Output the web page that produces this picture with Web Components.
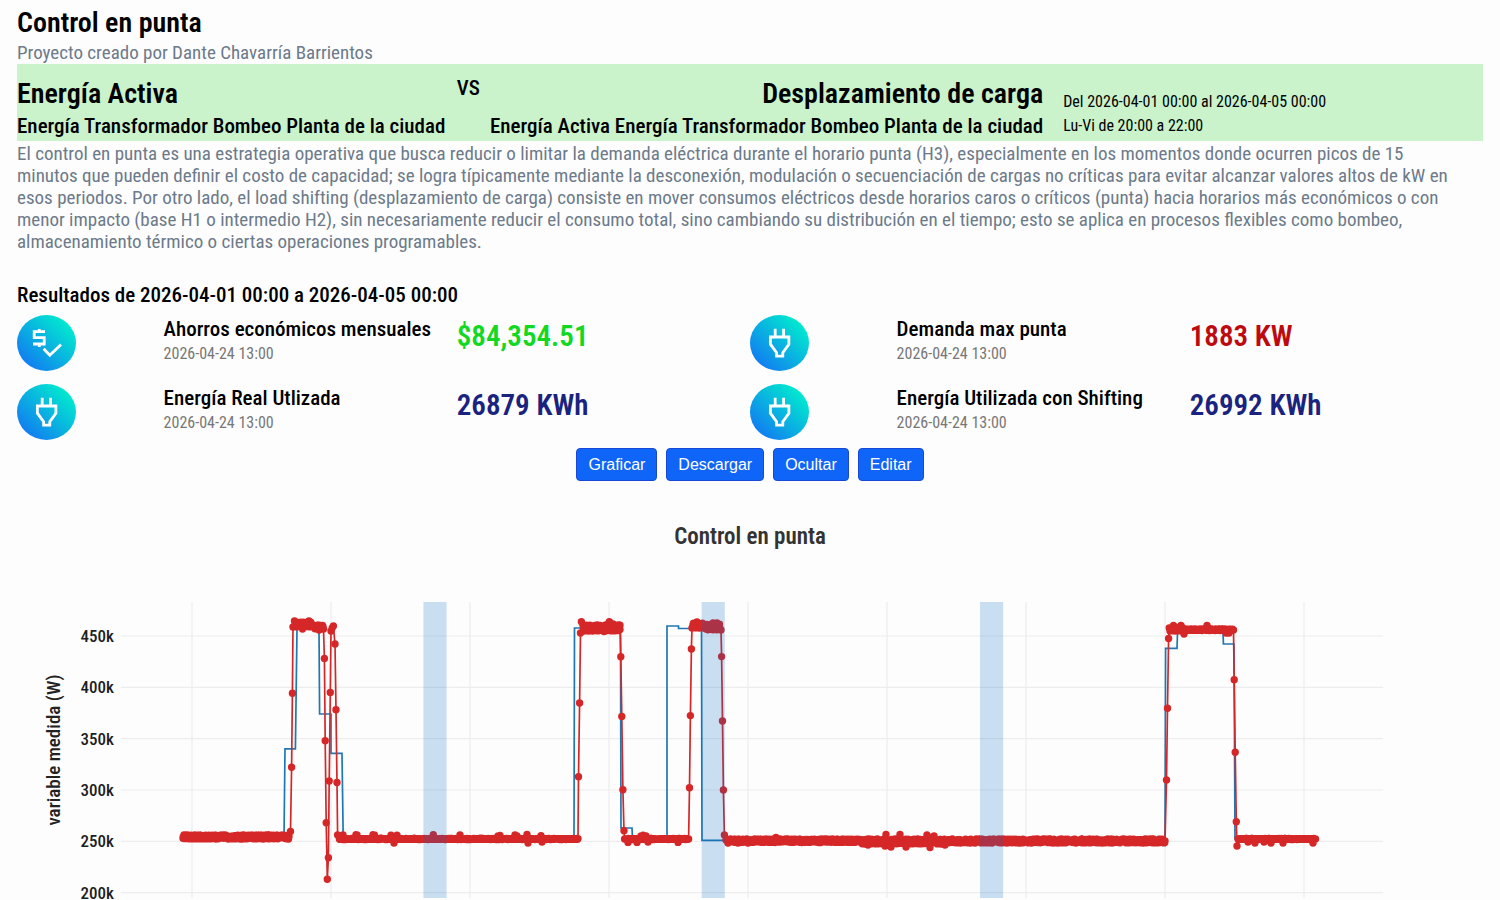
<!DOCTYPE html>
<html lang="es">
<head>
<meta charset="utf-8">
<meta name="viewport" content="width=device-width, initial-scale=1">
<title>Control en punta</title>
<style>
  body {
    margin: 0;
    background: #fdfdfe;
    color: #000;
    font-family: "Roboto Condensed", Roboto, "Liberation Sans", sans-serif;
  }
</style>
</head>
<body>
<peak-page>
  <project-header slot="header" heading="Control en punta">Proyecto creado por Dante Chavarría Barrientos</project-header>
  <compare-banner slot="header">
    <span slot="left-title">Energía Activa</span>
    <span slot="left-source">Energía Transformador Bombeo Planta de la ciudad</span>
    <span slot="right-title">Desplazamiento de carga</span>
    <span slot="right-source">Energía Activa Energía Transformador Bombeo Planta de la ciudad</span>
    <span slot="range">Del 2026-04-01 00:00 al 2026-04-05 00:00</span>
    <span slot="schedule">Lu-Vi de 20:00 a 22:00</span>
  </compare-banner>
  <span slot="description">El control en punta es una estrategia operativa que busca reducir o limitar la demanda eléctrica durante el horario punta (H3), especialmente en los momentos donde ocurren picos de 15 minutos que pueden definir el costo de capacidad; se logra típicamente mediante la desconexión, modulación o secuenciación de cargas no críticas para evitar alcanzar valores altos de kW en esos periodos. Por otro lado, el load shifting (desplazamiento de carga) consiste en mover consumos eléctricos desde horarios caros o críticos (punta) hacia horarios más económicos o con menor impacto (base H1 o intermedio H2), sin necesariamente reducir el consumo total, sino cambiando su distribución en el tiempo; esto se aplica en procesos flexibles como bombeo, almacenamiento térmico o ciertas operaciones programables.</span>
  <span slot="results-title">Resultados de 2026-04-01 00:00 a 2026-04-05 00:00</span>
  <result-item slot="results" icon="savings" date="2026-04-24 13:00" value="$84,354.51" style="--value: #12d822">Ahorros económicos mensuales</result-item>
  <result-item slot="results" icon="plug" date="2026-04-24 13:00" value="1883 KW" style="--value: #bd0a0e">Demanda max punta</result-item>
  <result-item slot="results" icon="plug" date="2026-04-24 13:00" value="26879 KWh">Energía Real Utlizada</result-item>
  <result-item slot="results" icon="plug" date="2026-04-24 13:00" value="26992 KWh">Energía Utilizada con Shifting</result-item>
  <action-button slot="actions">Graficar</action-button>
  <action-button slot="actions">Descargar</action-button>
  <action-button slot="actions">Ocultar</action-button>
  <action-button slot="actions">Editar</action-button>
  <power-chart slot="chart"></power-chart>
</peak-page>

<script>
class PeakPage extends HTMLElement {
  connectedCallback() {
    this.attachShadow({ mode: 'open' });
    this.shadowRoot.innerHTML = `
      <style>
        :host {
          display: block;
          padding: 4px 17px 0;
        }
        .description {
          margin: 2px 0 0;
          padding-right: 24px;
          font-size: 19px;
          line-height: 22px;
          color: #6c7a89;
        }
        h4 {
          margin: 30px 0 7px;
          font-size: 21px;
          line-height: 25px;
          font-weight: 500;
        }
        .results {
          display: grid;
          grid-template-columns: 1fr 1fr;
          row-gap: 13px;
        }
        .actions {
          display: flex;
          justify-content: center;
          gap: 9px;
          margin-top: 8px;
        }
      </style>
      <main>
        <slot name="header"></slot>
        <p class="description"><slot name="description"></slot></p>
        <h4><slot name="results-title"></slot></h4>
        <div class="results"><slot name="results"></slot></div>
        <div class="actions"><slot name="actions"></slot></div>
        <slot name="chart"></slot>
      </main>
    `;
  }
}
customElements.define('peak-page', PeakPage);

class ProjectHeader extends HTMLElement {
  connectedCallback() {
    this.attachShadow({ mode: 'open' });
    this.shadowRoot.innerHTML = `
      <style>
        :host {
          display: block;
        }
        h1 {
          margin: 0;
          font-size: 28px;
          line-height: 38px;
          font-weight: 600;
        }
        p {
          margin: 0;
          font-size: 19px;
          line-height: 22px;
          color: #6c7a89;
        }
      </style>
      <h1>${this.getAttribute('heading')}</h1>
      <p><slot></slot></p>
    `;
  }
}
customElements.define('project-header', ProjectHeader);

class CompareBanner extends HTMLElement {
  connectedCallback() {
    this.attachShadow({ mode: 'open' });
    this.shadowRoot.innerHTML = `
      <style>
        :host {
          display: grid;
          grid-template-columns: 30% auto 1fr 30%;
          background: #caf2cb;
          padding: 11px 0 2px;
        }
        h2, h3, p {
          margin: 0;
          white-space: nowrap;
        }
        h2 {
          font-size: 28px;
          line-height: 38px;
          font-weight: 600;
        }
        h3 {
          font-size: 21px;
          line-height: 26px;
          font-weight: 500;
        }
        .right {
          text-align: right;
        }
        .dates {
          padding: 15px 0 0 20px;
        }
        .dates p {
          font-size: 16px;
          line-height: 24px;
        }
      </style>
      <div>
        <h2><slot name="left-title"></slot></h2>
        <h3><slot name="left-source"></slot></h3>
      </div>
      <h3>VS</h3>
      <div class="right">
        <h2><slot name="right-title"></slot></h2>
        <h3><slot name="right-source"></slot></h3>
      </div>
      <div class="dates">
        <p><slot name="range"></slot></p>
        <p><slot name="schedule"></slot></p>
      </div>
    `;
  }
}
customElements.define('compare-banner', CompareBanner);

const ICONS = {
  savings: `
    <path d="M28 16.7H17.2V22.6H27.2V29H16M22.3 14V16.7M22.3 29V32" />
    <path d="M26.7 33.8L32.8 40.2L44 29.5" />`,
  plug: `
    <path d="M25.2 13.7V22M33.6 13.7V22" />
    <path d="M20.4 22H38.9V29.2L32.8 37.6V41.2H26.6V37.6L20.4 29.2Z" />`
};

class ResultItem extends HTMLElement {
  connectedCallback() {
    this.attachShadow({ mode: 'open' });
    this.shadowRoot.innerHTML = `
      <style>
        :host {
          display: grid;
          grid-template-columns: 20% 40% 40%;
        }
        svg {
          display: block;
          width: 59px;
          height: 56px;
        }
        svg path {
          fill: none;
          stroke: #fff;
          stroke-width: 2.8;
        }
        .name {
          margin: 0;
          font-size: 21px;
          line-height: 28px;
          font-weight: 500;
        }
        .date {
          margin: 0;
          font-size: 16px;
          line-height: 22px;
          color: #777;
        }
        .value {
          font-size: 29px;
          line-height: 42px;
          font-weight: 600;
          color: var(--value, #1a237e);
        }
      </style>
      <svg viewBox="0 0 59 56" aria-hidden="true">
        <defs>
          <linearGradient id="fill" x1="0.1" y1="0.9" x2="0.9" y2="0.1">
            <stop offset="0" stop-color="#1278f2" />
            <stop offset="1" stop-color="#00f0cd" />
          </linearGradient>
        </defs>
        <ellipse cx="29.5" cy="28" rx="29.5" ry="28" fill="url(#fill)" />
        ${ICONS[this.getAttribute('icon')]}
      </svg>
      <div>
        <p class="name"><slot></slot></p>
        <p class="date">${this.getAttribute('date')}</p>
      </div>
      <div class="value">${this.getAttribute('value')}</div>
    `;
  }
}
customElements.define('result-item', ResultItem);

class ActionButton extends HTMLElement {
  connectedCallback() {
    this.attachShadow({ mode: 'open' });
    this.shadowRoot.innerHTML = `
      <style>
        :host {
          display: block;
        }
        button {
          display: block;
          padding: 5px 11px;
          border: 1px solid #1749d6;
          border-radius: 4px;
          background: #1065f9;
          color: #fff;
          font: 16px/21px "Liberation Sans", Arial, sans-serif;
          cursor: pointer;
        }
        button:hover {
          background: #0b5ed7;
        }
      </style>
      <button type="button"><slot></slot></button>
    `;
  }
}
customElements.define('action-button', ActionButton);

// Flat stretches of the measured series: [from, to, lowest y, highest y]
const RUNS = [
  [183, 289, 835, 839],
  [295, 312, 622, 627],
  [312, 323, 625, 629],
  [340, 578, 838.5, 839.5],
  [583, 620, 625, 631],
  [627, 688, 838.5, 839.5],
  [693, 705, 623, 628],
  [706, 720, 624, 630],
  [727, 860, 839, 842.5],
  [861, 945, 839, 844],
  [946, 1165, 839, 843],
  [1170, 1183, 627, 631],
  [1184, 1233, 629, 630.5],
  [1239, 1315, 838.5, 839.5]
];

// Samples that leave those levels
const POINTS = [
  [183, 838], [288, 839], [290.5, 831.5], [291.6, 767.3], [292.4, 693.3], [293, 627], [294.5, 621],
  [309, 621], [302.5, 629], [313, 626], [319, 630], [322.5, 625.5], [323.5, 629], [324.4, 658.4],
  [325.2, 740.7], [326.2, 822.8], [327.3, 879.3], [328.4, 857.8], [329.2, 781], [330.3, 692.4], [331, 631],
  [333.4, 626], [332.2, 628], [335, 644], [336, 709.8], [337, 782.5], [337.6, 835], [339.4, 839], [343, 835],
  [356, 834.6], [357, 835], [373, 834.6], [374.4, 835], [391, 835.3], [394, 843], [397, 835.3], [433.3, 834.6], [460, 835],
  [498, 836], [500, 835.5], [515, 835], [517, 836], [528, 843], [527, 834.5], [541, 835.6], [542, 842],
  [578.5, 776.7], [579.6, 703], [580.5, 633], [581.4, 621.8], [604, 631.5], [609.3, 621.8], [613, 624],
  [620, 629.5], [620.8, 656.7], [621.8, 716.4], [622.9, 789.8], [624, 830.8], [624.6, 839], [628, 842.4],
  [637, 842.4], [641, 836], [643, 835.3], [646, 836], [648, 842], [678, 842.4], [688.6, 839],
  [689.5, 787.8], [690.4, 715.6], [691.4, 649], [692, 628], [694.5, 623.5], [697, 622], [699, 624], [706, 629],
  [713, 623], [717, 623], [721, 630], [721.6, 656.6], [722.5, 721], [723.4, 790], [724.4, 835], [726, 840],
  [728, 843], [738, 843], [748, 843], [776, 837.5], [868, 845], [886, 834.5], [885, 846], [891, 847],
  [900, 834.5], [906, 847], [927, 835], [930, 847.5], [934, 836], [945, 845],
  [1166.5, 780], [1167.5, 708.3], [1168.6, 638.5], [1169.2, 628], [1173.5, 625.5], [1181, 625.5], [1184, 634],
  [1207, 625.5], [1226, 633], [1229, 633], [1233.5, 630], [1234.2, 679.7], [1235.2, 752.2], [1236.3, 821.8],
  [1237, 846], [1238, 839], [1248, 842], [1255, 843], [1264, 842], [1271, 843], [1283, 843], [1313, 843], [1315.5, 839]
];

// Hourly series, drawn as steps
const STEPS = 'M183 838H284L285 748.8H295.4L297 629H319L319.6 714H331V753.4H342L343.2 838H574L574.5 628H620.5' +
  'L621 828H632L632.5 838H667V626H678.5V628.5H701.5L702 840.3H724V841H1165L1165.6 648.4H1177L1177.6 630H1223' +
  'L1223.4 644H1234L1235 839H1315';

// Repeatable noise between 0 and 1
function noise(x) {
  const n = Math.sin(x * 12.9898) * 43758.5453;
  return n - Math.floor(n);
}

class PowerChart extends HTMLElement {
  samples() {
    const list = POINTS.slice();
    for (const [from, to, low, high] of RUNS) {
      for (let x = from; x <= to; x += 0.25) {
        list.push([x, low + (high - low) * noise(x)]);
      }
    }
    return list.sort((a, b) => a[0] - b[0]);
  }

  connectedCallback() {
    const samples = this.samples();
    const line = samples.map(([x, y]) => `${x} ${y.toFixed(1)}`).join('L');
    const dots = samples.map(([x, y]) => `${x} ${y.toFixed(1)}h0`).join('M');
    const rows = [['450k', 636], ['400k', 687.3], ['350k', 738.6], ['300k', 790], ['250k', 841.4], ['200k', 892.6]];
    const columns = [192, 331, 470, 609, 748, 887, 1026, 1165, 1304];
    const peaks = [423.4, 701.6, 980];

    this.attachShadow({ mode: 'open' });
    this.shadowRoot.innerHTML = `
      <style>
        :host {
          display: block;
        }
        svg {
          display: block;
          width: 100%;
          height: auto;
        }
        .grid {
          stroke: #ededee;
          stroke-width: 1.2;
        }
        .tick {
          font-size: 17px;
          font-weight: 500;
          fill: #1d1d1d;
          text-anchor: end;
        }
        .axis {
          font-size: 19px;
          font-weight: 500;
          fill: #222;
          text-anchor: middle;
        }
        .title {
          font-size: 23px;
          font-weight: 600;
          fill: #333;
          text-anchor: middle;
        }
      </style>
      <svg viewBox="17 481 1466 419" role="img" aria-label="Control en punta">
        <g class="grid">
          ${columns.map(x => `<path d="M${x} 602V898" />`).join('')}
          ${rows.map(([, y]) => `<path d="M121 ${y}H1383" />`).join('')}
        </g>
        <path d="${STEPS}" fill="none" stroke="#1f77b4" stroke-width="1.7" />
        <path d="M${line}" fill="none" stroke="#d62728" stroke-width="1.7" stroke-linejoin="round" />
        <path d="M${dots}" fill="none" stroke="#d62728" stroke-width="7.4" stroke-linecap="round" />
        ${peaks.map(x => `<rect x="${x}" y="602" width="23.2" height="296" fill="#0066c4" fill-opacity="0.2" />`).join('')}
        ${rows.map(([label, y]) => `<text class="tick" x="114" y="${Math.round(y) + 6}">${label}</text>`).join('')}
        <text class="axis" transform="translate(60 750) rotate(-90)">variable medida (W)</text>
        <text class="title" x="750" y="544">Control en punta</text>
      </svg>
    `;
  }
}
customElements.define('power-chart', PowerChart);
</script>
</body>
</html>
